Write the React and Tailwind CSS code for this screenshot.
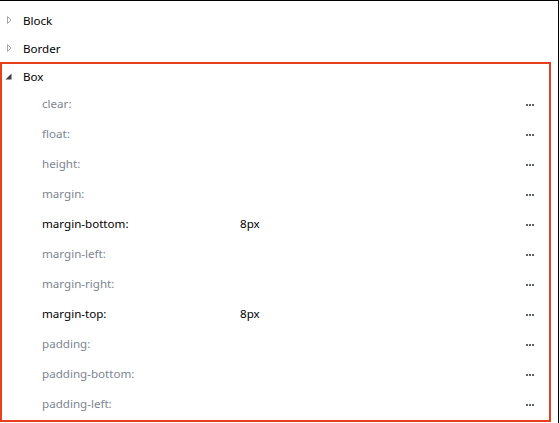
import React from "react";

const props = [
  { name: "clear:", value: "" },
  { name: "float:", value: "" },
  { name: "height:", value: "" },
  { name: "margin:", value: "" },
  { name: "margin-bottom:", value: "8px" },
  { name: "margin-left:", value: "" },
  { name: "margin-right:", value: "" },
  { name: "margin-top:", value: "8px" },
  { name: "padding:", value: "" },
  { name: "padding-bottom:", value: "" },
  { name: "padding-left:", value: "" },
];

function Collapsed() {
  return (
    <svg width="12" height="12" viewBox="0 0 12 12" className="shrink-0">
      <polygon points="7.5,2.5 7.5,9.5 11,6" fill="none" stroke="#a6a6a6" strokeWidth="1" />
    </svg>
  );
}

function Expanded() {
  return (
    <svg width="12" height="12" viewBox="0 0 12 12" className="shrink-0">
      <polygon points="5.5,9.5 11.5,9.5 11.5,3.5" fill="#404040" />
    </svg>
  );
}

function Dots() {
  return (
    <div className="flex gap-px mt-[4px]">
      <div className="w-[2px] h-[2px] bg-[#5b6470]" />
      <div className="w-[2px] h-[2px] bg-[#5b6470]" />
      <div className="w-[2px] h-[2px] bg-[#5b6470]" />
    </div>
  );
}

export default function App() {
  return (
    <div
      className="w-[560px] h-[423px] bg-white overflow-hidden text-[11.6px]"
      style={{ fontFamily: "'Noto Sans', 'Open Sans', sans-serif" }}
    >
      <div className="w-[559px] h-[423px] border-t border-r border-black pt-[5px]">
        <div className="h-[28px] flex items-center text-black">
          <Collapsed />
          <span className="ml-[11px] pt-[2px]">Block</span>
        </div>
        <div className="h-[28px] flex items-center text-black">
          <Collapsed />
          <span className="ml-[11px] pt-[2px]">Border</span>
        </div>
        <div className="w-[551px] h-[360px] border-2 border-[#e8401c] overflow-hidden">
          <div className="h-[24px] flex items-center text-black -ml-[2px]">
            <Expanded />
            <span className="ml-[11px] pt-[2px]">Box</span>
          </div>
          {props.map((p) => (
            <div key={p.name} className="h-[30px] flex items-center pl-[40px] pr-[15px]">
              <span
                className={
                  "w-[198px] shrink-0 pt-[1px] " + (p.value ? "text-black" : "text-[#7d8591]")
                }
              >
                {p.name}
              </span>
              <span className="text-black pt-[1px]">{p.value}</span>
              <div className="ml-auto">
                <Dots />
              </div>
            </div>
          ))}
        </div>
      </div>
    </div>
  );
}
